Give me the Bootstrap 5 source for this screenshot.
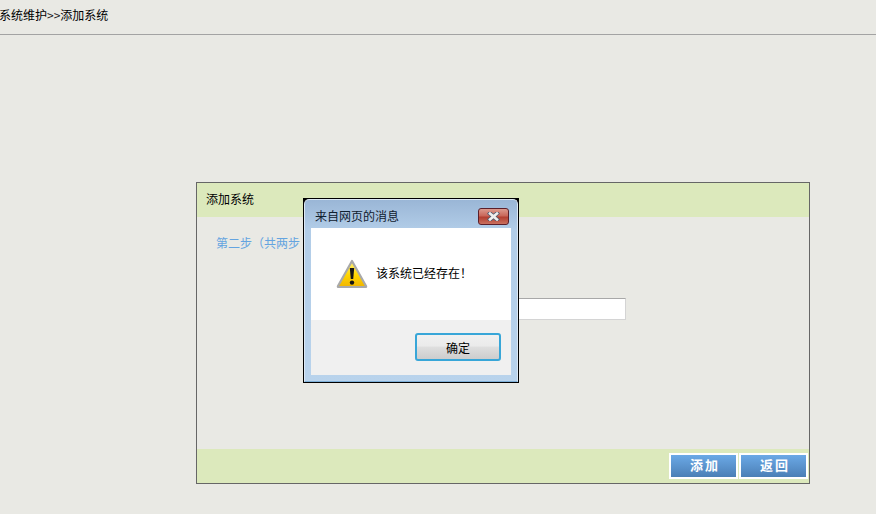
<!DOCTYPE html>
<html lang="zh-CN">
<head>
<meta charset="utf-8">
<title>添加系统</title>
<link rel="stylesheet" href="https://cdn.jsdelivr.net/npm/bootstrap@5.3.0/dist/css/bootstrap.min.css">
<style>
html,body{height:100%}
body{background:#e9e9e4;color:#000;font:12px/16px "Noto Sans CJK SC","Liberation Sans",sans-serif;overflow:hidden}
.crumb{height:35px;border-bottom:1px solid #a3a3a3;line-height:30px;white-space:nowrap;margin-left:-1px}
.crumb-arrow{color:#1c1c1c}
.sys-panel{width:614px;height:302px;margin:147px 0 0 196px;border:1px solid #666}
.sys-head{height:34px;background:#dce9bc;padding-left:9px;line-height:31px}
.sys-body{padding:17px 19px 0}
.sys-step{color:#64a4e0;line-height:17px}
.sys-input{width:316px;height:22px;margin:47px 0 0 94px;padding:0 4px;border:1px solid #d4d4d4;border-top-color:#a8a8a8;border-radius:0;background:#fff;font-size:12px}
.sys-foot{height:34px;background:#dce9bc;padding:4px 1px 4px 0;gap:1px}
.blue-btn{width:69px;height:26px;padding:0 0 3px 0;border:2px solid #fff;border-radius:0;background:linear-gradient(#6ba9e6,#4b7fb6);color:#fff;font-size:13px;font-weight:700;letter-spacing:2px;line-height:18px;text-indent:3px}
.blue-btn:hover{background:linear-gradient(#6ba9e6,#4b7fb6);color:#fff;border-color:#fff}
.msg-box{position:absolute;left:303px;top:198px;width:216px;height:185px;background:#000;padding:1px}
.msg-frame{height:100%;border-radius:5px 5px 0 0;background:linear-gradient(#9ab6d6 0,#b2cde8 30px,#b9d3ec 100%);border:1px solid #dce8f4;border-bottom-color:#7fb0d8;padding:0 6px 6px 6px}
.msg-title{height:28px;color:#10202f;padding:8px 2px 0 4px}
.msg-close{width:31px;height:17px;padding:0;border:1px solid #5b1f2a;border-radius:3px;background:linear-gradient(#dc9a8e 0,#c9675a 45%,#b33f31 55%,#c9705f 100%);margin-top:0}
.msg-white{height:92px;background:#fff;padding-left:25px;gap:8px}
.msg-text{margin-top:-3px;color:#000}
.msg-gray{height:55px;background:#f0f0f0;padding:13px 10px 0 0}
.msg-ok{width:86px;height:28px;padding:1px 0 0;border:2px solid #38a6d8;border-radius:3px;background:linear-gradient(#f0f0f0 0,#ebebeb 45%,#dedede 52%,#cdcdcd 100%);color:#000;font-size:12px;line-height:20px}
.msg-ok:hover{background:linear-gradient(#f0f0f0 0,#ebebeb 45%,#dedede 52%,#cdcdcd 100%);border-color:#38a6d8;color:#000}
</style>
</head>
<body>
<div class="crumb">系统维护<span class="crumb-arrow">&gt;&gt;</span>添加系统</div>

<div class="sys-panel d-flex flex-column">
  <div class="sys-head">添加系统</div>
  <div class="sys-body flex-grow-1">
    <div class="sys-step">第二步（共两步</div>
    <input class="form-control sys-input" type="text" aria-label="系统名称">
  </div>
  <div class="sys-foot d-flex justify-content-end">
    <button class="btn blue-btn" type="button">添加</button>
    <button class="btn blue-btn" type="button">返回</button>
  </div>
</div>

<div class="msg-box">
  <div class="msg-frame d-flex flex-column">
    <div class="msg-title d-flex justify-content-between align-items-start">
      <span>来自网页的消息</span>
      <button class="msg-close d-flex align-items-center justify-content-center" type="button" aria-label="关闭">
        <svg width="13" height="9" viewBox="0 0 13 9"><path d="M3 1.5 L10 7.5 M10 1.5 L3 7.5" stroke="#4d5a70" stroke-width="4.2" stroke-linecap="square"/><path d="M3 1.5 L10 7.5 M10 1.5 L3 7.5" stroke="#eeeeee" stroke-width="2.6" stroke-linecap="square"/></svg>
      </button>
    </div>
    <div class="msg-white d-flex align-items-center">
      <svg width="32" height="30" viewBox="0 0 32 30">
        <defs><linearGradient id="warnFill" x1="0" y1="0" x2="0" y2="1"><stop offset="0" stop-color="#fff27a"/><stop offset=".55" stop-color="#ffd500"/><stop offset="1" stop-color="#f0b400"/></linearGradient></defs>
        <path d="M16 2 L30 27 Q30.5 28 29.5 28 L2.5 28 Q1.5 28 2 27 Z" fill="url(#warnFill)" stroke="#a9a9a9" stroke-width="2.2" stroke-linejoin="round"/>
        <path d="M13.8 9 L18.2 9 L17.2 20 L14.8 20 Z" fill="#141414"/>
        <circle cx="16" cy="23.6" r="2.2" fill="#141414"/>
      </svg>
      <span class="msg-text">该系统已经存在！</span>
    </div>
    <div class="msg-gray d-flex justify-content-end align-items-start">
      <button class="btn msg-ok" type="button">确定</button>
    </div>
  </div>
</div>

<script src="https://cdn.jsdelivr.net/npm/bootstrap@5.3.0/dist/js/bootstrap.bundle.min.js"></script>
</body>
</html>
